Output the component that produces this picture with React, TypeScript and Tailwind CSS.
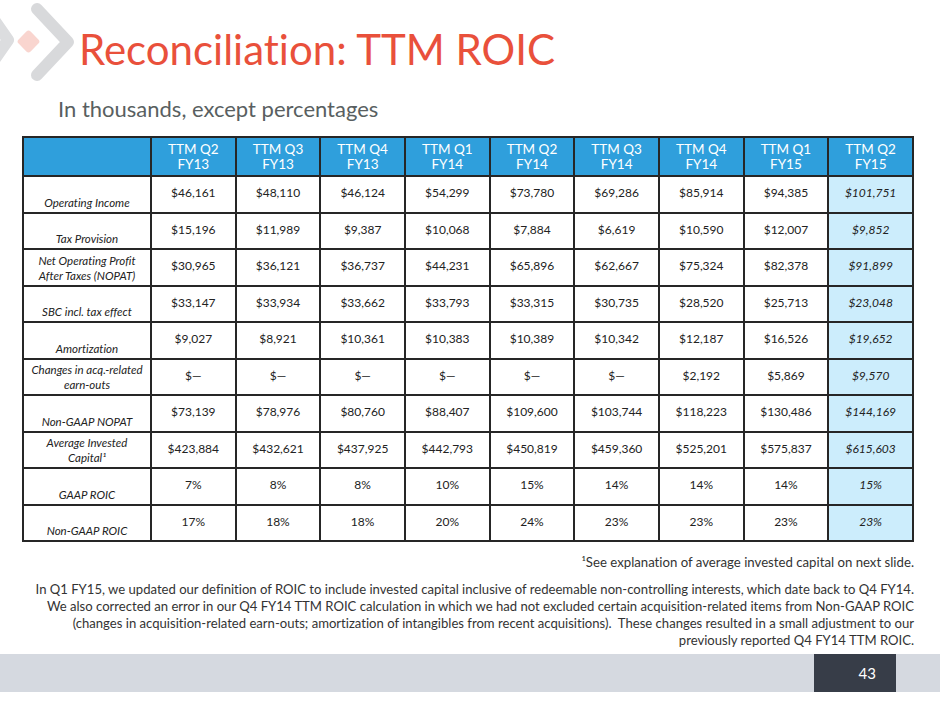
import React from 'react';

const headers = [
  ['TTM Q2', 'FY13'],
  ['TTM Q3', 'FY13'],
  ['TTM Q4', 'FY13'],
  ['TTM Q1', 'FY14'],
  ['TTM Q2', 'FY14'],
  ['TTM Q3', 'FY14'],
  ['TTM Q4', 'FY14'],
  ['TTM Q1', 'FY15'],
  ['TTM Q2', 'FY15'],
];

const rows: { label: string[]; values: string[] }[] = [
  { label: ['Operating Income'], values: ['$46,161', '$48,110', '$46,124', '$54,299', '$73,780', '$69,286', '$85,914', '$94,385', '$101,751'] },
  { label: ['Tax Provision'], values: ['$15,196', '$11,989', '$9,387', '$10,068', '$7,884', '$6,619', '$10,590', '$12,007', '$9,852'] },
  { label: ['Net Operating Profit', 'After Taxes (NOPAT)'], values: ['$30,965', '$36,121', '$36,737', '$44,231', '$65,896', '$62,667', '$75,324', '$82,378', '$91,899'] },
  { label: ['SBC incl. tax effect'], values: ['$33,147', '$33,934', '$33,662', '$33,793', '$33,315', '$30,735', '$28,520', '$25,713', '$23,048'] },
  { label: ['Amortization'], values: ['$9,027', '$8,921', '$10,361', '$10,383', '$10,389', '$10,342', '$12,187', '$16,526', '$19,652'] },
  { label: ['Changes in acq.-related', 'earn-outs'], values: ['$—', '$—', '$—', '$—', '$—', '$—', '$2,192', '$5,869', '$9,570'] },
  { label: ['Non-GAAP NOPAT'], values: ['$73,139', '$78,976', '$80,760', '$88,407', '$109,600', '$103,744', '$118,223', '$130,486', '$144,169'] },
  { label: ['Average Invested', 'Capital¹'], values: ['$423,884', '$432,621', '$437,925', '$442,793', '$450,819', '$459,360', '$525,201', '$575,837', '$615,603'] },
  { label: ['GAAP ROIC'], values: ['7%', '8%', '8%', '10%', '15%', '14%', '14%', '14%', '15%'] },
  { label: ['Non-GAAP ROIC'], values: ['17%', '18%', '18%', '20%', '24%', '23%', '23%', '23%', '23%'] },
];

const note = [
  'In Q1 FY15, we updated our definition of ROIC to include invested capital inclusive of redeemable non-controlling interests, which date back to Q4 FY14.',
  'We also corrected an error in our Q4 FY14 TTM ROIC calculation in which we had not excluded certain acquisition-related items from Non-GAAP ROIC',
  '(changes in acquisition-related earn-outs; amortization of intangibles from recent acquisitions).\u00a0 These changes resulted in a small adjustment to our',
  'previously reported Q4 FY14 TTM ROIC.',
];

// faded chevron mark in the top-left corner
function Logo() {
  return (
    <svg width="80" height="86" viewBox="0 0 80 86" className="absolute left-0 top-0">
      <polyline points="-6,20 8,40 -6,60" fill="none" stroke="#dcdddf" strokeWidth="12" strokeLinejoin="round" strokeLinecap="round" />
      <rect x="20" y="33" width="17" height="17" rx="3" fill="#f9d5cf" transform="rotate(45 28.5 41.5)" />
      <polyline points="37,9 68,42 37,75" fill="none" stroke="#d8d9db" strokeWidth="12" strokeLinejoin="round" strokeLinecap="round" />
    </svg>
  );
}

export default function App() {
  return (
    <div
      className="relative w-[940px] h-[705px] bg-white overflow-hidden [font-variant-ligatures:none]"
      style={{ fontFamily: 'Lato, "Open Sans", sans-serif' }}
    >
      <Logo />

      <div className="pl-[79px] pt-[24px] h-[95px]">
        <h1 className="text-[42px] leading-[50px] text-[#e9503b]">Reconciliation: TTM ROIC</h1>
      </div>

      <div className="pl-[58px] text-[22px] leading-[28px] text-[#595f61]">In thousands, except percentages</div>

      <div className="pl-[22px] pt-[13px]">
        <table className="border-collapse border-2 border-[#262626] w-[892px] table-fixed">
          <colgroup>
            <col className="w-[128px]" />
            {headers.map((_, i) => (
              <col key={i} />
            ))}
          </colgroup>
          <thead>
            <tr className="h-[39px] bg-[#2f9fdc]">
              <th className="border-2 border-[#262626]" />
              {headers.map((h, i) => (
                <th key={i} className="border-2 border-[#262626] text-white font-normal text-[13.5px] leading-[15px]">
                  <div>{h[0]}</div>
                  <div>{h[1]}</div>
                </th>
              ))}
            </tr>
          </thead>
          <tbody>
            {rows.map((r, ri) => (
              <tr key={ri} className="h-[36.5px]">
                <td className="border-2 border-[#262626] italic text-[11.5px] leading-[15px] text-[#222] text-center align-bottom pb-[2px]">
                  {r.label.map((l, li) => (
                    <div key={li}>{l}</div>
                  ))}
                </td>
                {r.values.map((v, vi) => (
                  <td
                    key={vi}
                    className={
                      vi === 8
                        ? 'border-2 border-[#262626] bg-[#ccedfc] italic text-[12px] text-[#222] text-center align-middle pb-[2px]'
                        : 'border-2 border-[#262626] text-[12px] text-[#222] text-center align-middle pb-[2px]'
                    }
                  >
                    {v}
                  </td>
                ))}
              </tr>
            ))}
          </tbody>
        </table>
      </div>

      <div className="w-[914px] text-right text-[13.2px] leading-[17px] text-[#333] pt-[12px]">
        ¹See explanation of average invested capital on next slide.
      </div>
      <div className="w-[914px] text-right text-[13.1px] leading-[17px] text-[#333] pt-[10px] whitespace-nowrap">
        {note.map((l, i) => (
          <div key={i}>{l}</div>
        ))}
      </div>

      <div className="absolute left-0 right-0 top-[654px] h-[38px] bg-[#d5d9e0] flex justify-end pr-[44px]">
        <div className="w-[82px] h-full bg-[#373d48] text-white text-[15px] flex items-center justify-end pr-[20px]">43</div>
      </div>
    </div>
  );
}
